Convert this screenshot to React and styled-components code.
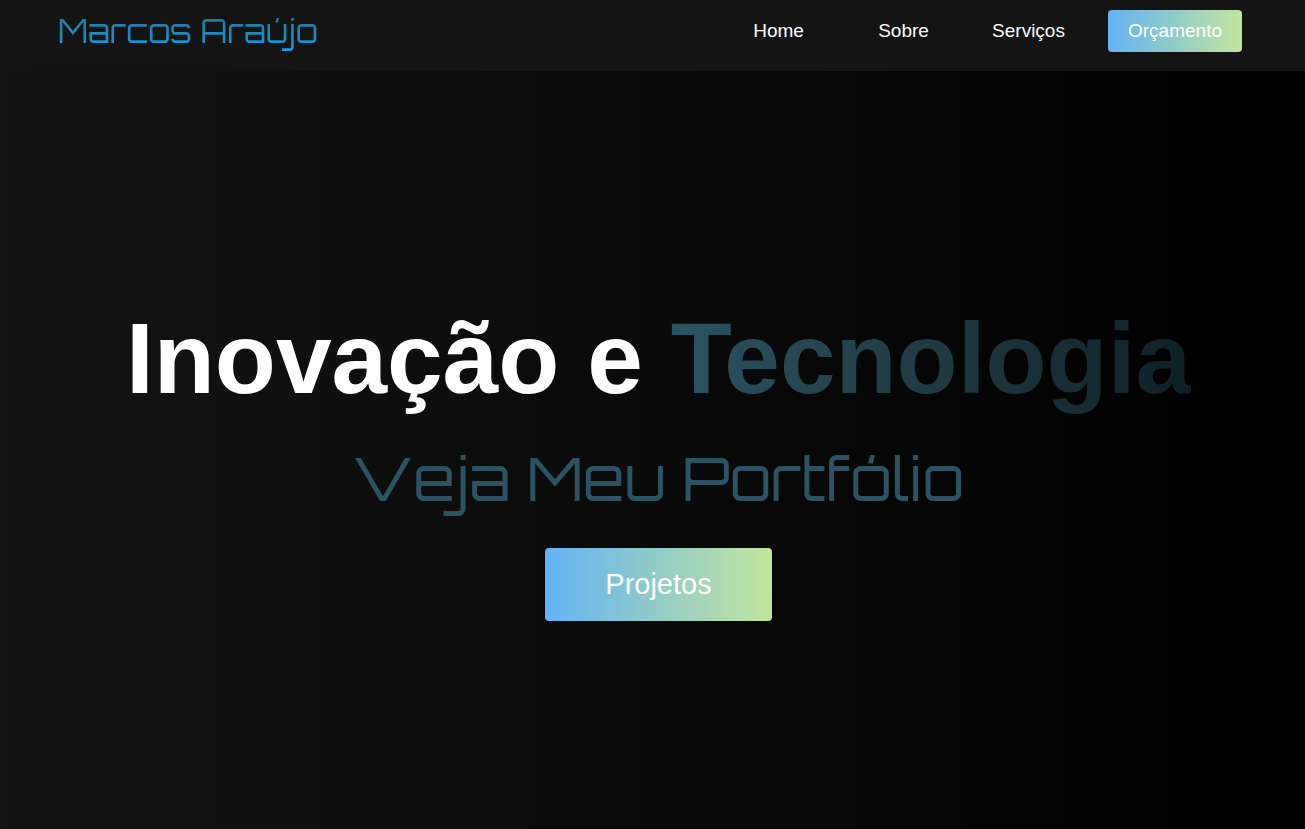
import React from "react";
import styled, { createGlobalStyle } from "styled-components";

const GlobalStyle = createGlobalStyle`
  *, *::before, *::after { box-sizing: border-box; }
  body {
    margin: 0;
    background: #141414;
    color: #fff;
    font-family: "Liberation Sans", Arial, sans-serif;
  }
`;

const Page = styled.div`
  display: flex;
  flex-direction: column;
  min-height: 100vh;
`;

const Header = styled.header`
  display: flex;
  align-items: flex-start;
  justify-content: space-between;
  padding: 10px 63px 19px 58px;
  background: #141414;
`;

const Logo = styled.a`
  font-family: Orbitron, "DejaVu Sans", sans-serif;
  font-weight: 200;
  font-size: 32px;
  line-height: 42px;
  text-decoration: none;
  white-space: nowrap;
  color: transparent;
  background: linear-gradient(to bottom, #2c6f8e, #0f9fe4);
  background-clip: text;
  -webkit-background-clip: text;
`;

const Nav = styled.nav`
  display: flex;
  align-items: center;
`;

const NavLink = styled.a`
  width: 125px;
  font-size: 19px;
  line-height: 22px;
  text-align: center;
  text-decoration: none;
  color: #fff;
`;

const GradientButton = styled.button`
  margin: ${({ $large }) => ($large ? "0" : "0 0 0 17px")};
  padding: ${({ $large }) => ($large ? "20px 60px" : "10px 20px")};
  border: 0;
  border-radius: 4px;
  background: linear-gradient(to right, #64b3f4, #c2e59c);
  color: #fff;
  font-family: inherit;
  font-size: ${({ $large }) => ($large ? "29px" : "19px")};
  line-height: ${({ $large }) => ($large ? "33px" : "22px")};
  cursor: pointer;
`;

const Hero = styled.main`
  flex: 1;
  display: flex;
  flex-direction: column;
  align-items: center;
  justify-content: center;
  padding: 20px 0 0 12px;
  background: linear-gradient(to right, #141414, #000);
  text-align: center;
`;

const Title = styled.h1`
  margin: 0;
  font-size: 100px;
  line-height: 116px;
  font-weight: 700;
`;

const Highlight = styled.span`
  color: transparent;
  background: linear-gradient(to right, #2c5364, #203a43, #0f2027);
  background-clip: text;
  -webkit-background-clip: text;
`;

const Subtitle = styled.h2`
  margin: 24px 0 32px;
  font-family: Orbitron, "DejaVu Sans", sans-serif;
  font-weight: 200;
  font-size: 60px;
  line-height: 76px;
  color: #2c5364;
`;

export default function App() {
  return (
    <Page>
      <GlobalStyle />
      <Header>
        <Logo href="#home">Marcos Araújo</Logo>
        <Nav>
          <NavLink href="#home">Home</NavLink>
          <NavLink href="#sobre">Sobre</NavLink>
          <NavLink href="#servicos">Serviços</NavLink>
          <GradientButton type="button">Orçamento</GradientButton>
        </Nav>
      </Header>
      <Hero>
        <Title>
          Inovação e <Highlight>Tecnologia</Highlight>
        </Title>
        <Subtitle>Veja Meu Portfólio</Subtitle>
        <GradientButton type="button" $large>
          Projetos
        </GradientButton>
      </Hero>
    </Page>
  );
}
